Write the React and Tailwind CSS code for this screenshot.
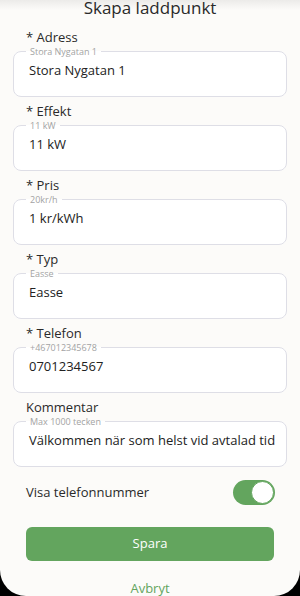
import { useState } from 'react';

const FIELDS = [
  { label: '* Adress', hint: 'Stora Nygatan 1', value: 'Stora Nygatan 1' },
  { label: '* Effekt', hint: '11 kW', value: '11 kW' },
  { label: '* Pris', hint: '20kr/h', value: '1 kr/kWh' },
  { label: '* Typ', hint: 'Easse', value: 'Easse' },
  { label: '* Telefon', hint: '+467012345678', value: '0701234567' },
  { label: 'Kommentar', hint: 'Max 1000 tecken', value: 'Välkommen när som helst vid avtalad tid' },
];

function Field({ label, hint, value }) {
  return (
    <div className="flex flex-col">
      <label className="pl-[13px] text-[13px] leading-[15px] text-[#2a2a2a]">{label}</label>
      <fieldset className="mt-[2px] h-[50px] rounded-[8px] border border-[#dedee6] bg-white pl-[12px] pr-2">
        <legend className="px-[4px] text-[9px] leading-[9px] text-[#a3a3a3]">{hint}</legend>
        <div className="-mt-[4px] pl-[3px] text-[13px] leading-[36px] text-[#222] whitespace-nowrap">{value}</div>
      </fieldset>
    </div>
  );
}

export default function App() {
  const [showPhone, setShowPhone] = useState(true);

  return (
    <div className="w-[300px] h-[596px] bg-black overflow-hidden" style={{ fontFamily: '"Open Sans", sans-serif' }}>
      <div className="relative h-[596px] rounded-b-[26px] bg-[#fcfbf9] flex flex-col">
        <div className="absolute inset-x-0 top-0 h-[10px] bg-gradient-to-b from-[#ecebe9] to-transparent" />
        <h1 className="relative z-10 -mt-[5px] text-center text-[17px] leading-[26px] text-[#2a2a2a]">Skapa laddpunkt</h1>

        <div className="mt-[9px] px-[13px] flex flex-col gap-[7px]">
          {FIELDS.map(f => <Field key={f.label} {...f} />)}
        </div>

        <div className="mt-[13px] flex items-center justify-between pl-[26px] pr-[25px]">
          <span className="text-[13px] text-[#2a2a2a]">Visa telefonnummer</span>
          <button onClick={() => setShowPhone(v => !v)}
            className={`w-[42px] h-[25px] rounded-full p-[1px] flex items-center ${showPhone ? 'bg-[#63a55e] justify-end' : 'bg-[#ccc] justify-start'}`}>
            <span className="w-[23px] h-[23px] rounded-full bg-white border border-[#63a55e]" />
          </button>
        </div>

        <div className="mt-[22px] px-[26px]">
          <button className="w-full h-[34px] rounded-[6px] bg-[#63a55e] text-white text-[13px]">Spara</button>
        </div>

        <div className="mt-[18px] text-center text-[13px] text-[#63a55e]">Avbryt</div>
      </div>
    </div>
  );
}
